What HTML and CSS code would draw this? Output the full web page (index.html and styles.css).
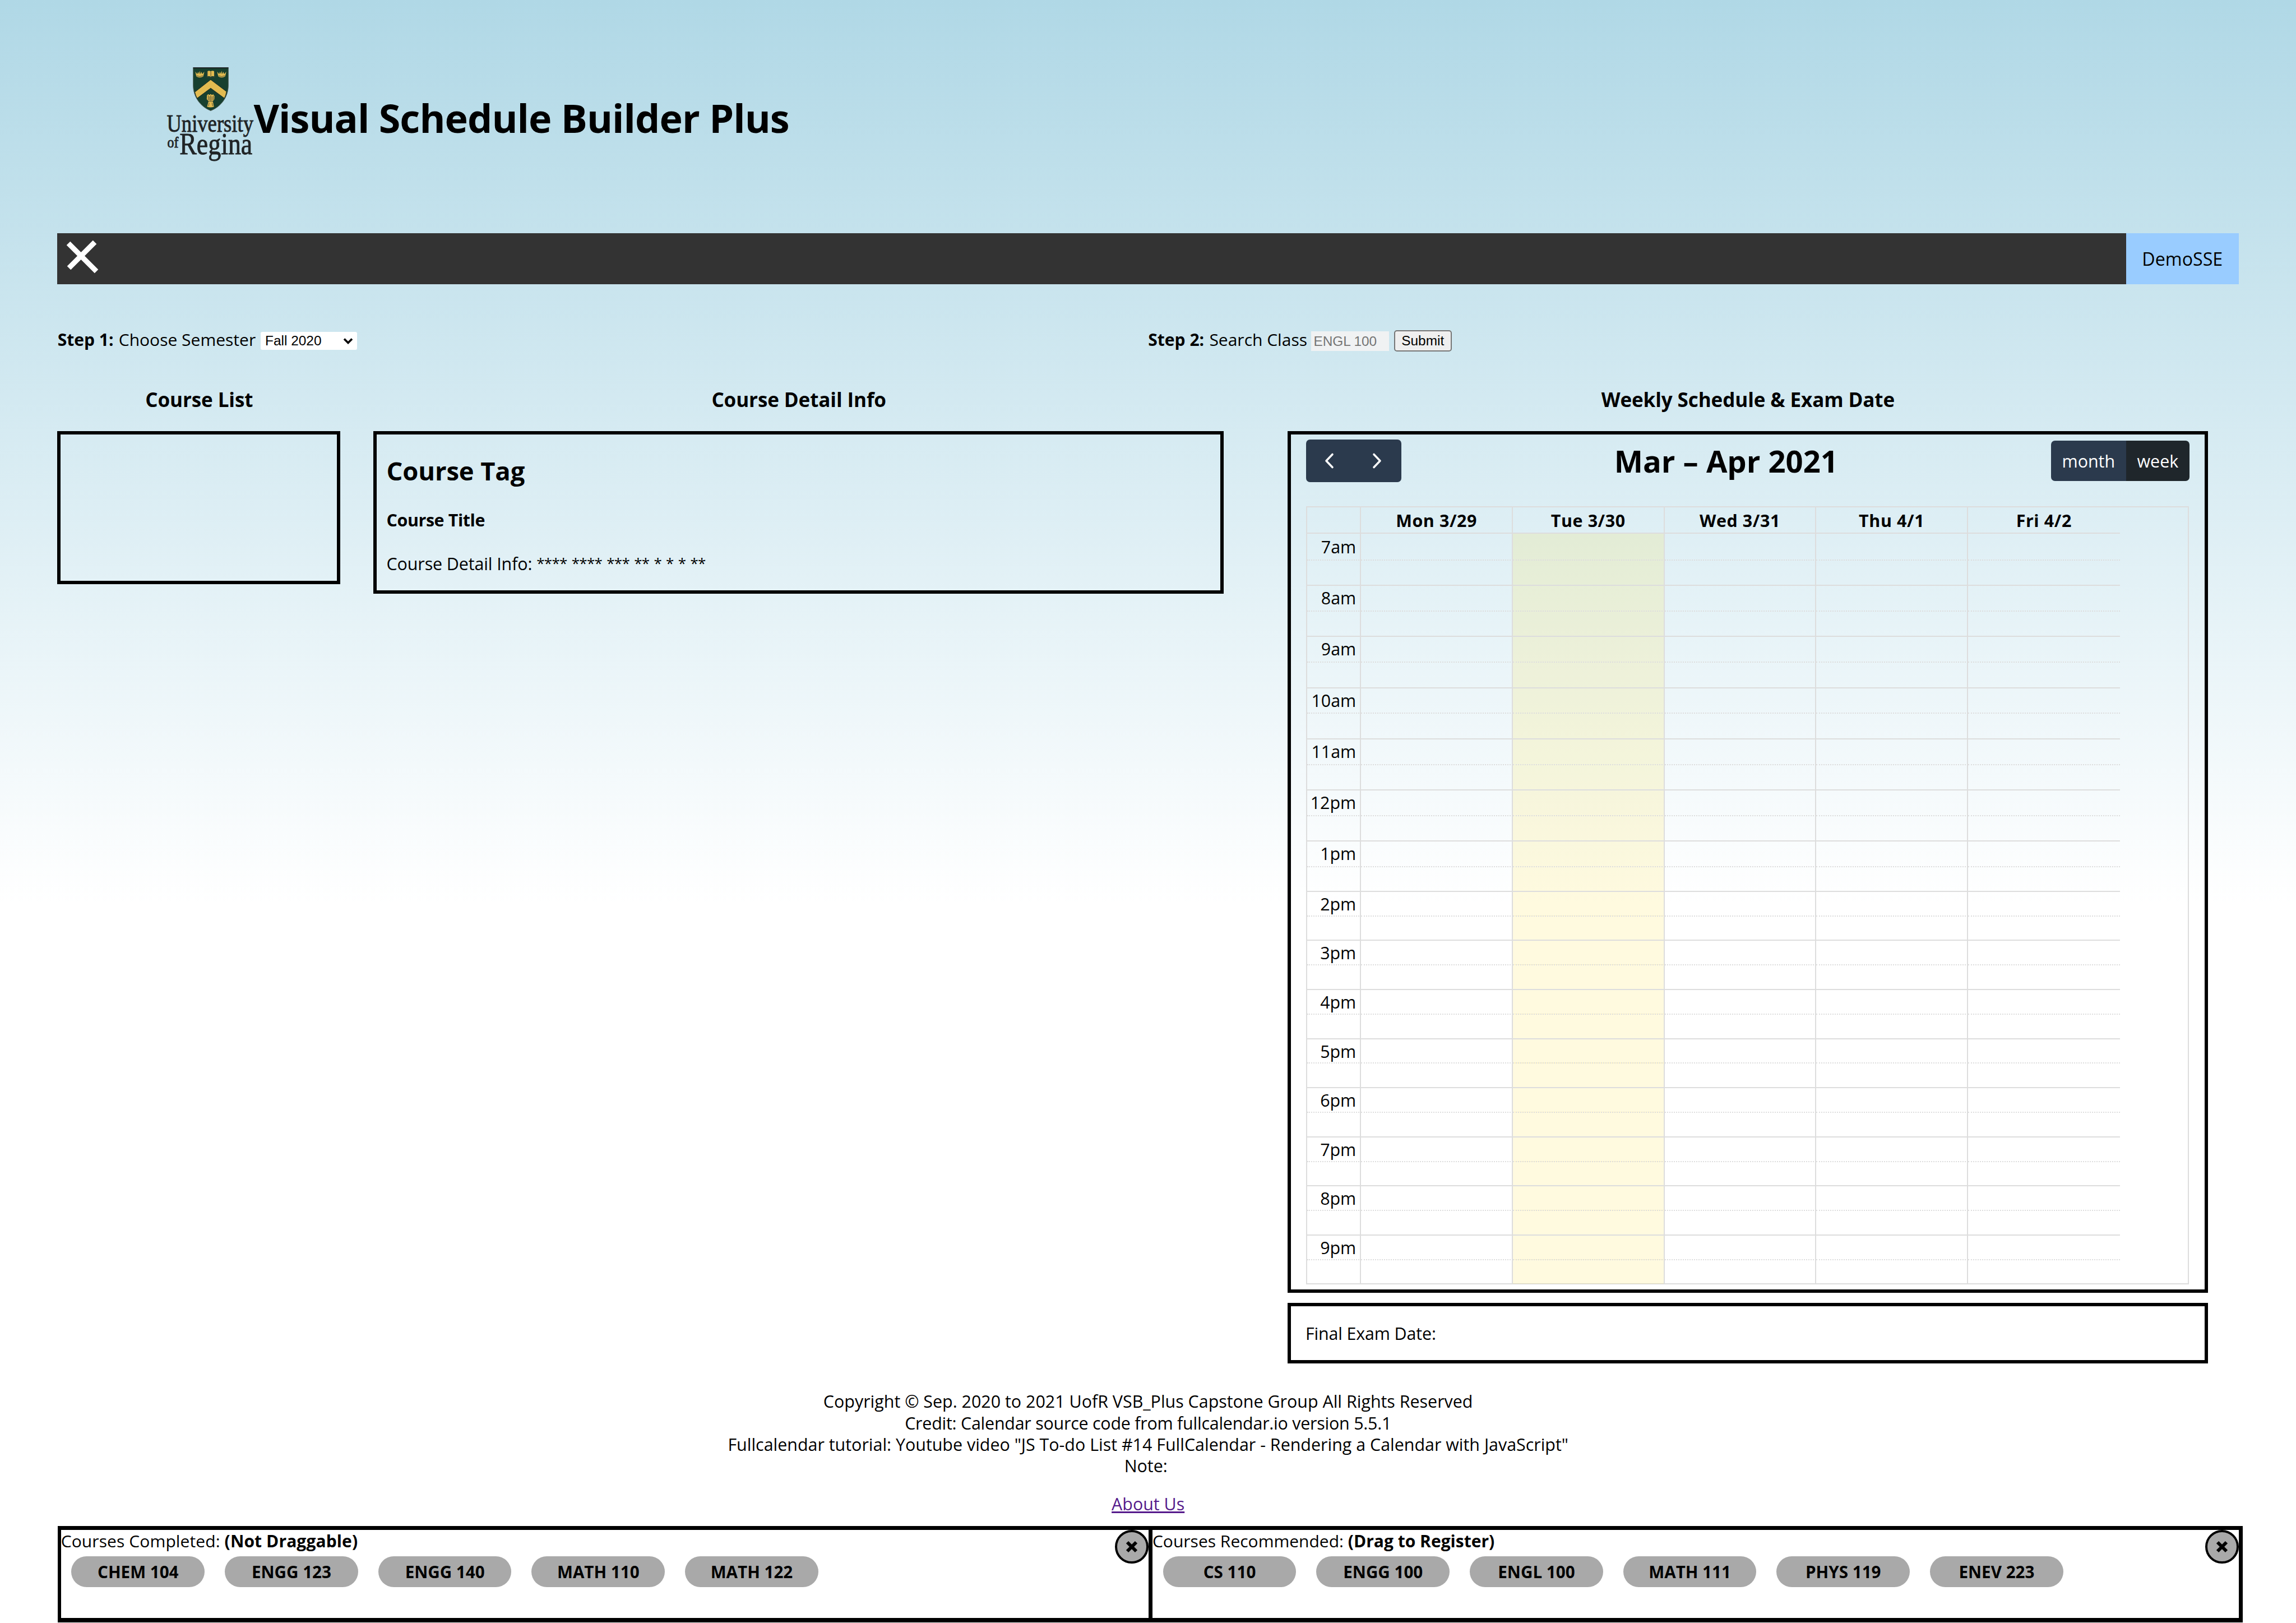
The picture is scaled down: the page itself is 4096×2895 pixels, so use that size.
FILE: index.html
```
<!DOCTYPE html>
<html lang="en">
<head>
<meta charset="utf-8">
<title>Visual Schedule Builder Plus</title>
<link rel="stylesheet" href="styles.css">
</head>
<body>
<header class="header">
  <svg class="logo" viewBox="50 70 545 590" role="img" aria-label="University of Regina">
    <path d="M220 82H435V190C435 262 390 322 327 346C265 322 220 262 220 190Z" fill="#17402f" stroke="#55605c" stroke-width="3"/>
    <path d="M220 84H435" stroke="#1a1f22" stroke-width="6"/>
    <path d="M327 156L424 229Q420 252 411 270L327 208L244 270Q234 252 230 232Z" fill="#e3bb50" stroke="#14241e" stroke-width="3"/>
    <g fill="#e3bb50">
      <path id="crown" d="M233 107L245 122L250 108L256 122L260 102L265 122L271 108L276 122L288 107L282 136Q260 150 239 136Z"/>
      <use href="#crown" x="134"/>
      <path d="M308 104Q319 99 327 106Q336 99 348 104V136Q337 132 327 139Q318 132 308 136Z"/>
      <path d="M304 252L312 245L320 250L327 244L334 250L343 246L350 256L349 276L340 288L347 322Q327 328 305 322L314 288L303 276Z"/>
    </g>
    <g fill="none" stroke="#3b4436" stroke-width="3">
      <path d="M304 110V142H322L328 146L334 142H352V110M328 107V138"/>
      <path d="M312 252V282M320 258V284M327 252V286M335 258V284M343 254V280M312 289H342M318 298L314 318M335 298L340 318M240 132Q260 142 281 132M374 132Q394 142 415 132"/>
    </g>
    <g class="wordmark">
      <text x="58" y="473" font-size="152" textLength="530" lengthAdjust="spacingAndGlyphs">University</text>
      <text x="62" y="570" font-size="92" textLength="68" lengthAdjust="spacingAndGlyphs">of</text>
      <text x="136" y="611" font-size="186" textLength="446" lengthAdjust="spacingAndGlyphs">Regina</text>
    </g>
  </svg>
  <h1 class="title">Visual Schedule Builder Plus</h1>
</header>

<nav class="navbar">
  <svg class="menu-close" viewBox="0 0 68 68"><path d="M55 7L9 53M8 9L58 59"/></svg>
  <a class="user">DemoSSE</a>
</nav>

<section class="steps">
  <div class="step"><b>Step 1:</b><span class="step-label">Choose Semester</span>
    <div class="select">Fall 2020<svg viewBox="0 0 18 12"><path d="M2 2.500L9 9.500L16 2.500"/></svg></div>
  </div>
  <div class="step"><b>Step 2:</b><span class="step-label search">Search Class</span>
    <div class="input">ENGL 100</div><div class="submit">Submit</div>
  </div>
</section>

<main class="columns">
  <section class="col-list">
    <h3 class="heading">Course List</h3>
    <div class="box list-box"></div>
  </section>
  <section class="col-detail">
    <h3 class="heading">Course Detail Info</h3>
    <div class="box detail-box">
      <h2 class="tag">Course Tag</h2>
      <h4 class="course-title">Course Title</h4>
      <p class="detail">Course Detail Info: <span class="stars">**** **** *** ** * * * **</span></p>
    </div>
  </section>
  <section class="col-calendar">
    <h3 class="heading">Weekly Schedule &amp; Exam Date</h3>
    <div class="box calendar">
      <div class="toolbar">
        <div class="btn-group nav-group">
          <span class="btn"><svg viewBox="0 0 20 30"><path d="M15 3.500L4 15L15 26.500"/></svg></span>
          <span class="btn"><svg viewBox="0 0 20 30"><path d="M4 3.500L15 15L4 26.500"/></svg></span>
        </div>
        <h2 class="range">Mar – Apr 2021</h2>
        <div class="btn-group view-group">
          <span class="btn month">month</span><span class="btn active">week</span>
        </div>
      </div>
      <div class="grid" id="grid">
        <div class="row head"><div class="axis"></div><div class="cell">Mon 3/29</div><div class="cell">Tue 3/30</div><div class="cell">Wed 3/31</div><div class="cell">Thu 4/1</div><div class="cell">Fri 4/2</div></div>
      </div>
    </div>
    <div class="box exam">Final Exam Date:</div>
  </section>
</main>

<footer class="footer">
  <p>Copyright © Sep. 2020 to 2021 UofR VSB_Plus Capstone Group All Rights Reserved<br><span class="credit">Credit: Calendar source code from fullcalendar.io version 5.5.1</span><br>Fullcalendar tutorial: Youtube video "JS To-do List #14 FullCalendar - Rendering a Calendar with JavaScript"<br>Note:&nbsp;</p>
  <p class="about"><a>About Us</a></p>
</footer>

<section class="dock">
  <div class="pane completed">
    <p>Courses Completed: <b>(Not Draggable)</b></p>
    <div class="pills"><span>CHEM 104</span><span>ENGG 123</span><span>ENGG 140</span><span>MATH 110</span><span>MATH 122</span></div>
    <div class="close"><svg viewBox="0 0 22 22"><path d="M3 3L19 19M19 3L3 19"/></svg></div>
  </div>
  <div class="pane">
    <p>Courses Recommended: <b>(Drag to Register)</b></p>
    <div class="pills"><span>CS 110</span><span>ENGG 100</span><span>ENGL 100</span><span>MATH 111</span><span>PHYS 119</span><span>ENEV 223</span></div>
    <div class="close"><svg viewBox="0 0 22 22"><path d="M3 3L19 19M19 3L3 19"/></svg></div>
  </div>
</section>
<script src="calendar.js"></script>
</body>
</html>
```
FILE: calendar.js
```
// Builds the half-hour slots of the week view, 7am to 9:30pm.
const grid = document.getElementById('grid');
for (let slot = 0; slot < 30; slot++) {
  const hour = 7 + Math.floor(slot / 2);
  const half = slot % 2 === 1;
  const row = document.createElement('div');
  row.className = 'row slot' + (half ? ' minor' : '') + (slot === 0 ? ' first' : '') + (slot >= 13 ? ' short' : '');
  const axis = document.createElement('div');
  axis.className = 'axis';
  if (!half) axis.textContent = (hour > 12 ? hour - 12 : hour) + (hour < 12 ? 'am' : 'pm');
  row.append(axis);
  for (let day = 0; day < 5; day++) {
    const cell = document.createElement('div');
    cell.className = 'cell' + (day === 1 ? ' today' : '');
    row.append(cell);
  }
  grid.append(row);
}
```
FILE: styles.css
```
* { box-sizing: border-box; margin: 0; padding: 0; }
html { background: #fff; overflow: hidden; }
body {
  width: 4093.3px;
  height: 2893.1px;
  zoom: 1.000674;
  overflow: hidden;
  background: linear-gradient(to bottom, #b0d8e6 0, #fff 1610px) no-repeat #fff;
  font-family: "Open Sans", "Noto Sans", sans-serif;
  font-size: 30.4px;
  color: #000;
}

.header { display: flex; height: 416px; padding: 116.7px 0 0 294.6px; }
.logo { width: 159px; height: 172px; flex: none; overflow: visible; }
.wordmark { font-family: "Liberation Serif", serif; fill: #202426; stroke: #202426; stroke-width: 3; }
.title { margin: 45.5px 0 0 -1.5px; font-size: 70px; line-height: 96px; letter-spacing: -.9px; white-space: nowrap; }

.navbar { display: flex; justify-content: space-between; width: 3888.7px; height: 91px; margin-left: 102.2px; background: #333; }
.menu-close { width: 68px; height: 68px; margin: 9px 0 0 11.500px; }
.menu-close path { fill: none; stroke: #fff; stroke-width: 9.2; }
.user { width: 200.4px; background: #9cf; font-size: 32.2px; line-height: 92px; text-align: center; }

.steps { display: grid; grid-template-columns: 1fr 1fr; width: 3888.7px; height: 46px; margin: 75px 0 0 102.6px; font-size: 30px; }
.step { display: flex; align-items: center; white-space: nowrap; }
.step b { width: 109px; }
.step-label { width: 253.2px; }
.step-label.search { width: 181.1px; }
.select, .input, .submit { font-family: "Liberation Sans", Arial, sans-serif; font-size: 24.4px; margin-top: 6px; }
.select { display: flex; align-items: center; justify-content: space-between; width: 172.3px; height: 32px; padding: 0 7px 0 8px; background: #fff; border-radius: 3px; }
.select svg { width: 18px; height: 12px; }
.select path { fill: none; stroke: #000; stroke-width: 3.6; }
.input { width: 139.3px; height: 35px; line-height: 35px; padding-left: 5px; background: #f0f2f3; color: #757575; letter-spacing: -.1px; }
.submit { width: 103.2px; height: 38px; margin-left: 8.6px; line-height: 34px; text-align: center; background: #efefef; border: 2px solid #767676; border-radius: 5px; }

.columns { display: flex; margin: 60px 0 0 102.2px; align-items: flex-start; }
.col-list { width: 504.3px; }
.col-detail { width: 1516.8px; margin-left: 58.6px; }
.col-calendar { width: 1641.1px; margin-left: 113.1px; }
.heading { padding-left: 1.5px; font-size: 35px; line-height: 49px; margin-bottom: 32px; text-align: center; letter-spacing: -.1px; }
.box { border: 6px solid #000; }
.list-box { height: 272px; }
.detail-box { height: 289px; padding: 33.8px 0 0 18px; }
.tag { font-size: 45.3px; line-height: 62px; letter-spacing: -.1px; }
.course-title { margin-top: 35.6px; line-height: 40px; letter-spacing: -.4px; }
.detail { margin-top: 37.8px; line-height: 40px; letter-spacing: -.1px; }
.stars { font-size: 26px; line-height: 0; vertical-align: 3px; letter-spacing: -.7px; word-spacing: 2px; }

.calendar { height: 1536px; padding: 9px 26.8px 0 27.200px; }
.toolbar { display: flex; align-items: center; justify-content: space-between; height: 75px; }
.range { font-size: 54.3px; line-height: 76px; }
.btn-group { display: flex; border-radius: 7px; overflow: hidden; color: #fff; }
.btn { display: flex; align-items: center; justify-content: center; background: #2b3a4d; }
.nav-group { width: 170px; height: 75px; }
.nav-group .btn { flex: 1; }
.nav-group svg { width: 20px; height: 30px; }
.nav-group path { fill: none; stroke: #fff; stroke-width: 3.6; stroke-linecap: round; stroke-linejoin: round; }
.view-group { height: 72px; }
.view-group .btn { width: 113px; }
.view-group .month { width: 134px; }
.view-group .active { background: #1f262b; }

.grid { margin-top: 43px; width: 1574px; height: 1388px; border: 2px solid #ddd; }
.row { display: grid; grid-template-columns: 96.500px repeat(5, 270.500px); width: 1449px; }
.row > div { border-right: 2px solid #ddd; }
.row > div:last-child { border-right: 0; }
.head { height: 45.8px; line-height: 46.4px; font-weight: bold; text-align: center; letter-spacing: .6px; }
.slot { height: 45.6px; line-height: 43px; }
.slot > div { border-top: 2px solid #ddd; }
.slot.minor > div { border-top-style: dotted; }
.slot.first { height: 47.2px; }
.slot.first .axis { padding-top: 1.700px; }
.slot.short { height: 43.78px; }
.slot .axis { padding-right: 7px; text-align: right; }
.slot .today { background: rgba(255, 220, 40, .15); }

.exam { height: 108px; margin-top: 17.5px; padding-left: 26.5px; line-height: 97px; letter-spacing: -.15px; }

.footer { width: 3888.4px; margin: 48px 0 0 102.6px; text-align: center; line-height: 38.4px; }
.credit { letter-spacing: -.23px; }
.about { margin-top: 29.300px; }
.about a { color: #551a8b; text-decoration: underline; }

.dock { display: flex; width: 3895.4px; height: 172px; margin: 20.2px 0 0 102.6px; border: solid #000; border-width: 7px 7px 8px 6px; background: #fff; font-size: 30px; }
.pane { position: relative; flex: 1; line-height: 39px; }
.completed { flex: none; width: 1946px; border-right: 7px solid #000; }
.completed p { letter-spacing: .1px; }
.pills { display: flex; gap: 36px; margin: 8.600px 0 0 18.800px; }
.pills span { width: 237.5px; height: 55px; border-radius: 27.5px; background: #a9a9a9; font-size: 29.6px; font-weight: bold; line-height: 56px; text-align: center; }
.close { position: absolute; top: 0; right: 0; display: flex; align-items: center; justify-content: center; width: 60px; height: 60px; border: 4px solid #000; border-radius: 50%; background: #a9a9a9; }
.close svg { width: 22px; height: 22px; }
.close path { stroke: #000; stroke-width: 6; }
```
